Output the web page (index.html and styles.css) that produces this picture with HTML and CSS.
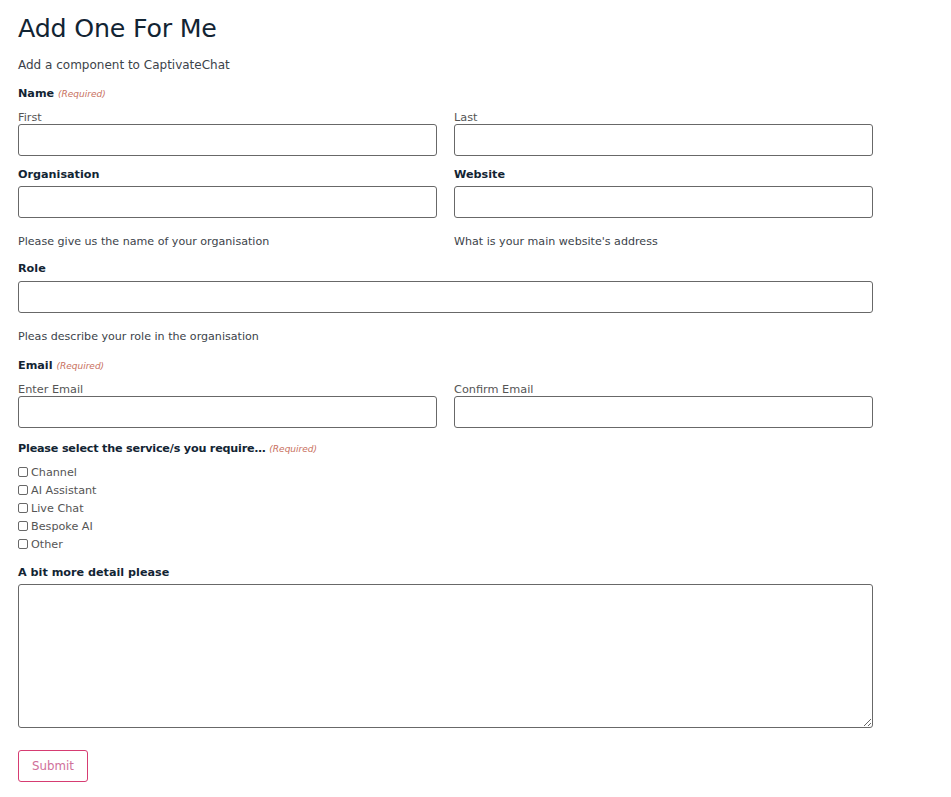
FILE: index.html
```html
<!DOCTYPE html>
<html>
<head>
<meta charset="utf-8">
<link rel="stylesheet" href="styles.css">
</head>
<body>
<div class="page">
  <h1 class="title">Add One For Me</h1>
  <p class="intro">Add a component to CaptivateChat</p>
  <form class="form">
    <div class="field">
      <div class="label">Name <span class="req">(Required)</span></div>
      <div class="row two">
        <div class="col">
          <div class="sublabel">First</div>
          <input class="input" type="text">
        </div>
        <div class="col">
          <div class="sublabel">Last</div>
          <input class="input" type="text">
        </div>
      </div>
    </div>
    <div class="row two field org">
      <div class="col">
        <div class="label">Organisation</div>
        <input class="input gap" type="text">
        <div class="desc">Please give us the name of your organisation</div>
      </div>
      <div class="col">
        <div class="label">Website</div>
        <input class="input gap" type="text">
        <div class="desc">What is your main website's address</div>
      </div>
    </div>
    <div class="field role">
      <div class="label">Role</div>
      <input class="input gap wide" type="text">
      <div class="desc">Pleas describe your role in the organisation</div>
    </div>
    <div class="field email">
      <div class="label">Email <span class="req">(Required)</span></div>
      <div class="row two">
        <div class="col">
          <div class="sublabel">Enter Email</div>
          <input class="input" type="text">
        </div>
        <div class="col">
          <div class="sublabel">Confirm Email</div>
          <input class="input" type="text">
        </div>
      </div>
    </div>
    <div class="field services">
      <div class="label"><span class="tight">Please select the service/s you require…</span> <span class="req">(Required)</span></div>
      <ul class="checks">
        <li><label class="check"><input class="box" type="checkbox"><span>Channel</span></label></li>
        <li><label class="check"><input class="box" type="checkbox"><span>AI Assistant</span></label></li>
        <li><label class="check"><input class="box" type="checkbox"><span>Live Chat</span></label></li>
        <li><label class="check"><input class="box" type="checkbox"><span>Bespoke AI</span></label></li>
        <li><label class="check"><input class="box" type="checkbox"><span>Other</span></label></li>
      </ul>
    </div>
    <div class="field detail">
      <div class="label">A bit more detail please</div>
      <textarea class="textarea"></textarea>
    </div>
    <div class="actions">
      <button class="submit" type="button">Submit</button>
    </div>
  </form>
</div>
</body>
</html>
```
FILE: styles.css
```css
* { box-sizing: border-box; }
html, body { margin: 0; padding: 0; background: #fff; }
body {
  font-family: "DejaVu Sans", "Noto Sans", sans-serif;
  color: #122433;
}
.page {
  width: 855px;
  margin-left: 18px;
  padding-top: 14px;
}
.title {
  margin: 0;
  font-size: 25.3px;
  font-weight: 400;
  line-height: 30px;
  color: #122433;
  letter-spacing: -0.2px;
}
.intro {
  margin: 13px 0 0;
  font-size: 12px;
  line-height: 16px;
  color: #3c434a;
}
.form { margin-top: 13px; }
.label {
  font-size: 11.2px;
  font-weight: 700;
  line-height: 16px;
  color: #122433;
  white-space: nowrap;
}
.tight { letter-spacing: -0.2px; }
.req {
  font-size: 9px;
  font-weight: 400;
  font-style: italic;
  color: #c8705e;
}
.row.two {
  display: grid;
  grid-template-columns: 419px 419px;
  column-gap: 17px;
}
.field { margin-top: 10px; }
.field:first-child { margin-top: 0; }
.org { margin-top: 11px; }
.role { margin-top: 12px; }
.email { margin-top: 14px; }
.services { margin-top: 13px; }
.detail { margin-top: 12px; }
.sublabel {
  font-size: 11.3px;
  line-height: 12px;
  color: #555;
  margin-top: 10px;
}
.input {
  display: block;
  width: 100%;
  height: 32px;
  border: 1px solid #686868;
  border-radius: 3px;
  margin: 0;
  padding: 0 8px;
  font: inherit;
  background: #fff;
}
.input.gap { margin-top: 3px; }
.input.wide { margin-top: 4px; }
.desc {
  font-size: 11.1px;
  line-height: 14px;
  color: #3c434a;
  margin-top: 17px;
}
.checks {
  list-style: none;
  margin: 6px 0 0;
  padding: 0;
}
.checks li {
  height: 18px;
  display: flex;
  align-items: center;
}
.check {
  display: flex;
  align-items: center;
  font-size: 11.2px;
  color: #555;
}
.box {
  appearance: none;
  -webkit-appearance: none;
  width: 10px;
  height: 10px;
  margin: 0 3px 0 0;
  border: 1px solid #686868;
  border-radius: 2px;
  background: #fff;
}
.textarea {
  display: block;
  width: 100%;
  height: 144px;
  margin: 3px 0 0;
  border: 1px solid #686868;
  border-radius: 3px;
  resize: vertical;
  font: inherit;
}
.actions { margin-top: 22px; }
.submit {
  width: 70px;
  height: 32px;
  border: 1px solid #d63c72;
  border-radius: 3px;
  background: #fff;
  color: #d0709a;
  font-family: inherit;
  font-size: 11.8px;
  padding: 0;
  cursor: pointer;
}
```
